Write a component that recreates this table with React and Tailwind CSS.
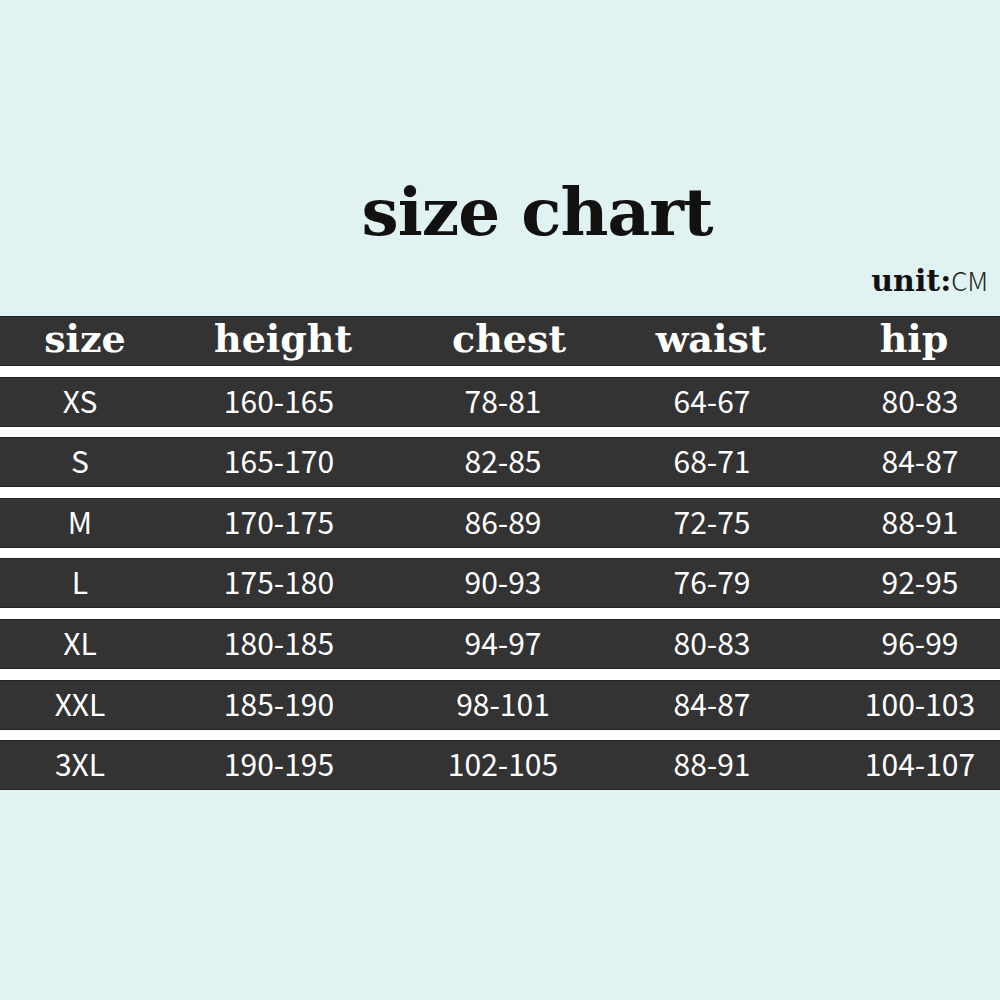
const ROWS = [
  ["XS", "160-165", "78-81", "64-67", "80-83"],
  ["S", "165-170", "82-85", "68-71", "84-87"],
  ["M", "170-175", "86-89", "72-75", "88-91"],
  ["L", "175-180", "90-93", "76-79", "92-95"],
  ["XL", "180-185", "94-97", "80-83", "96-99"],
  ["XXL", "185-190", "98-101", "84-87", "100-103"],
  ["3XL", "190-195", "102-105", "88-91", "104-107"],
];

const HEADERS = [
  ["size", "pl-[10px]"],
  ["height", "pl-2"],
  ["chest", "pl-3"],
  ["waist", "pr-[2px]"],
  ["hip", "pl-3"],
];

const serif = "font-['DejaVu_Serif',serif]";
const sans = "font-['Noto_Sans_CJK_SC','Noto_Sans',sans-serif]";
const cols = "grid grid-cols-[160px_238px_210px_208px_1fr] items-center";

export default function App() {
  return (
    <div className="w-[1000px] h-[1000px] bg-[#e0f2f2] flex flex-col">
      {/* Title */}
      <div className="h-[172px]" />
      <h1 className={`${serif} font-bold text-[66px] leading-[80px] text-[#111] text-center pl-[74px] tracking-[-1px]`}>
        size chart
      </h1>
      <div className="flex justify-end items-baseline pr-[12px] pt-2 mt-[-2px] h-[66px]">
        <span className={`${serif} font-bold text-[30px] text-[#111]`}>unit:</span>
        <span className={`${sans} font-light text-[26px] text-[#222]`}>CM</span>
      </div>

      {/* Table */}
      <div className="flex flex-col gap-[10.6px] bg-white">
        <div className={`h-[50px] bg-[#333] border-y border-[#242424] ${cols}`}>
          {HEADERS.map(([h, pad]) => (
            <div key={h} className={`${serif} font-bold text-[38px] leading-[40px] text-white text-center mb-[4px] ${pad}`}>
              {h}
            </div>
          ))}
        </div>
        {ROWS.map((row) => (
          <div key={row[0]} className={`h-[50px] bg-[#333] border-y border-[#242424] ${cols}`}>
            {row.map((c, i) => (
              <div key={i} className={`${sans} text-[30px] leading-[40px] text-white text-center mb-[4px] ${i === 4 ? "pl-[24px]" : ""}`}>
                {c}
              </div>
            ))}
          </div>
        ))}
      </div>
    </div>
  );
}
